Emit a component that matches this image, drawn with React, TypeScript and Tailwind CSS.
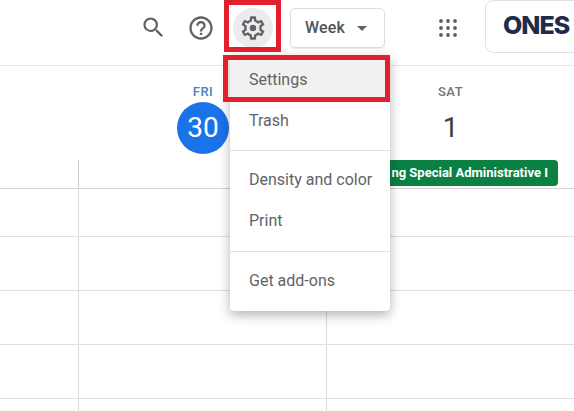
const GEAR =
  'M19.43 12.98c.04-.32.07-.64.07-.98 0-.34-.03-.66-.07-.98l2.11-1.65c.19-.15.24-.42.12-.64l-2-3.46c-.09-.16-.26-.25-.44-.25-.06 0-.12.01-.17.03l-2.49 1c-.52-.4-1.08-.73-1.69-.98l-.38-2.65C14.46 2.18 14.25 2 14 2h-4c-.25 0-.46.18-.49.42l-.38 2.65c-.61.25-1.17.59-1.69.98l-2.49-1c-.06-.02-.12-.03-.18-.03-.17 0-.34.09-.43.25l-2 3.46c-.13.22-.07.49.12.64l2.11 1.65c-.04.32-.07.65-.07.98 0 .33.03.66.07.98l-2.11 1.65c-.19.15-.24.42-.12.64l2 3.46c.09.16.26.25.44.25.06 0 .12-.01.17-.03l2.49-1c.52.4 1.08.73 1.69.98l.38 2.65c.03.24.24.42.49.42h4c.25 0 .46-.18.49-.42l.38-2.65c.61-.25 1.17-.59 1.69-.98l2.49 1c.06.02.12.03.18.03.17 0 .34-.09.43-.25l2-3.46c.12-.22.07-.49-.12-.64l-2.11-1.65zm-1.98-1.71c.04.31.05.52.05.73 0 .21-.02.43-.05.73l-.14 1.13.89.7 1.08.84-.7 1.21-1.27-.51-1.04-.42-.9.68c-.43.32-.84.56-1.25.73l-1.06.43-.16 1.13-.2 1.35h-1.4l-.19-1.35-.16-1.13-1.06-.43c-.43-.18-.83-.41-1.23-.71l-.91-.7-1.06.43-1.27.51-.7-1.21 1.08-.84.89-.7-.14-1.13c-.03-.31-.05-.54-.05-.74s.02-.43.05-.73l.14-1.13-.89-.7-1.08-.84.7-1.21 1.27.51 1.04.42.9-.68c.43-.32.84-.56 1.25-.73l1.06-.43.16-1.13.2-1.35h1.39l.19 1.35.16 1.13 1.06.43c.43.18.83.41 1.23.71l.91.7 1.06-.43 1.27-.51.7 1.21-1.07.85-.89.7.14 1.13zM12 9.2a2.8 2.8 0 100 5.6 2.8 2.8 0 000-5.6z';

function Icon({ d, size = 24 }: { d: string; size?: number }) {
  return (
    <svg width={size} height={size} viewBox="0 0 24 24" className="fill-[#5f6368]">
      <path d={d} />
    </svg>
  );
}

function GridRow({ height }: { height: string }) {
  return (
    <div className={`grid grid-cols-[79px_248px_1fr] border-b border-[#dfdfdf] ${height}`}>
      <div className="border-r border-[#dadada]" />
      <div className="border-r border-[#dadada]" />
      <div />
    </div>
  );
}

export default function App() {
  return (
    <div className="relative h-[411px] w-[574px] overflow-hidden bg-white font-['Roboto',sans-serif]">
      {/* top bar */}
      <div className="flex h-[66px] items-center border-b border-[#e4e4e4] pb-[10px] pl-[129px]">
        <div className="flex w-[48px] shrink-0 justify-center">
          <Icon size={27} d="M15.5 14h-.79l-.28-.27A6.47 6.47 0 0016 9.5 6.5 6.5 0 109.5 16c1.61 0 3.09-.59 4.23-1.57l.27.28v.79l5 4.99L20.49 19l-4.99-5zm-6 0C7.01 14 5 11.99 5 9.5S7.01 5 9.5 5 14 7.01 14 9.5 11.99 14 9.5 14z" />
        </div>
        <div className="flex w-[48px] shrink-0 justify-center">
          <Icon size={28} d="M11 18h2v-2h-2v2zm1-16C6.48 2 2 6.48 2 12s4.48 10 10 10 10-4.48 10-10S17.52 2 12 2zm0 18c-4.41 0-8-3.59-8-8s3.59-8 8-8 8 3.59 8 8-3.59 8-8 8zm0-14c-2.21 0-4 1.79-4 4h2c0-1.1.9-2 2-2s2 .9 2 2c0 2-3 1.75-3 5h2c0-2.25 3-2.5 3-5 0-2.21-1.79-4-4-4z" />
        </div>
        <div className="ml-[8px] flex h-[40px] w-[40px] shrink-0 items-center justify-center rounded-full bg-[#ececec]">
          <Icon size={28} d={GEAR} />
        </div>
        <div className="ml-[17px] flex h-[40px] w-[95px] shrink-0 items-center rounded-[5px] border border-[#dcdcdc] pt-[1px] pl-[14px] text-[16px] font-medium tracking-[0.2px] text-[#4f5357] shadow-[0_1px_1px_rgba(0,0,0,0.08)]">
          Week
          <span className="ml-[12px] h-0 w-0 border-x-[5px] border-t-[5px] border-x-transparent border-t-[#5f6368]" />
        </div>
        <div className="ml-[51px] shrink-0">
          <svg width="24" height="24" viewBox="0 0 24 24" className="fill-[#5f6368]">
            {[5, 12, 19].flatMap((y) =>
              [5, 12, 19].map((x) => <circle key={`${x}-${y}`} cx={x} cy={y} r="1.9" />),
            )}
          </svg>
        </div>
        <div className="ml-[25px] mt-[-3px] flex h-[53px] w-[110px] shrink-0 items-center rounded-[8px] border border-[#e2e2e2] pl-[17px]">
          <span className="font-['Inter',sans-serif] text-[25px] font-extrabold tracking-[-1px] text-[#1e2c4c]">ONES</span>
        </div>
      </div>

      {/* day headers */}
      <div className="grid h-[94px] grid-cols-[79px_248px_1fr]">
        <div />
        <div className="flex flex-col items-center pt-[18px]">
          <div className="text-[13px] leading-[16px] font-medium tracking-[0.5px] text-[#4a80c4]">FRI</div>
          <div className="mt-[2px] flex h-[52px] w-[52px] items-center justify-center rounded-full bg-[#1a73e8] text-[28px] text-white">
            30
          </div>
        </div>
        <div className="flex flex-col items-center pt-[18px]">
          <div className="text-[13px] leading-[16px] font-medium tracking-[0.5px] text-[#70757a]">SAT</div>
          <div className="mt-[2px] flex h-[52px] items-center text-[28px] text-[#3c4043]">1</div>
        </div>
      </div>

      {/* all-day row: the chip carries on behind the menu, only its visible part is kept */}
      <div className="grid h-[29px] grid-cols-[79px_1fr] border-b border-[#d4d4d4]">
        <div className="border-r border-[#d0d0d0]" />
        <div className="flex justify-end pr-[16px]">
          <div className="flex h-[26px] w-[168px] items-center justify-end overflow-hidden rounded-r-[4px] bg-[#0b8043] pr-[10px] text-[13px] font-bold whitespace-nowrap text-white">
            ng Special Administrative I
          </div>
        </div>
      </div>

      <GridRow height="h-[48px]" />
      <GridRow height="h-[54px]" />
      <GridRow height="h-[54px]" />
      <GridRow height="h-[54px]" />
      <GridRow height="h-[20px]" />

      {/* settings menu */}
      <div className="absolute top-[55px] left-[230px] w-[160px] rounded-[4px] bg-white pt-[3px] text-[16px] text-[#5f6368] shadow-[0_4px_12px_rgba(0,0,0,0.3)]">
        <div className="flex h-[44px] items-center bg-[#f1f1f1] pl-[19px]">Settings</div>
        <div className="flex h-[38px] items-center pl-[19px]">Trash</div>
        <div className="mt-[10px] border-t border-[#e0e0e0] pt-[9px]">
          <div className="flex h-[40px] items-center pl-[19px]">Density and color</div>
          <div className="flex h-[41px] items-center pl-[19px]">Print</div>
        </div>
        <div className="mt-[10px] border-t border-[#e0e0e0] pt-[9px] pb-[10px]">
          <div className="flex h-[40px] items-center pl-[19px]">Get add-ons</div>
        </div>
      </div>

      {/* red callouts */}
      <div className="absolute top-0 left-[224px] h-[52px] w-[57px] border-[5px] border-[#e0202c]" />
      <div className="absolute top-[55px] left-[223px] h-[47px] w-[167px] border-[5px] border-[#e0202c]" />
    </div>
  );
}
